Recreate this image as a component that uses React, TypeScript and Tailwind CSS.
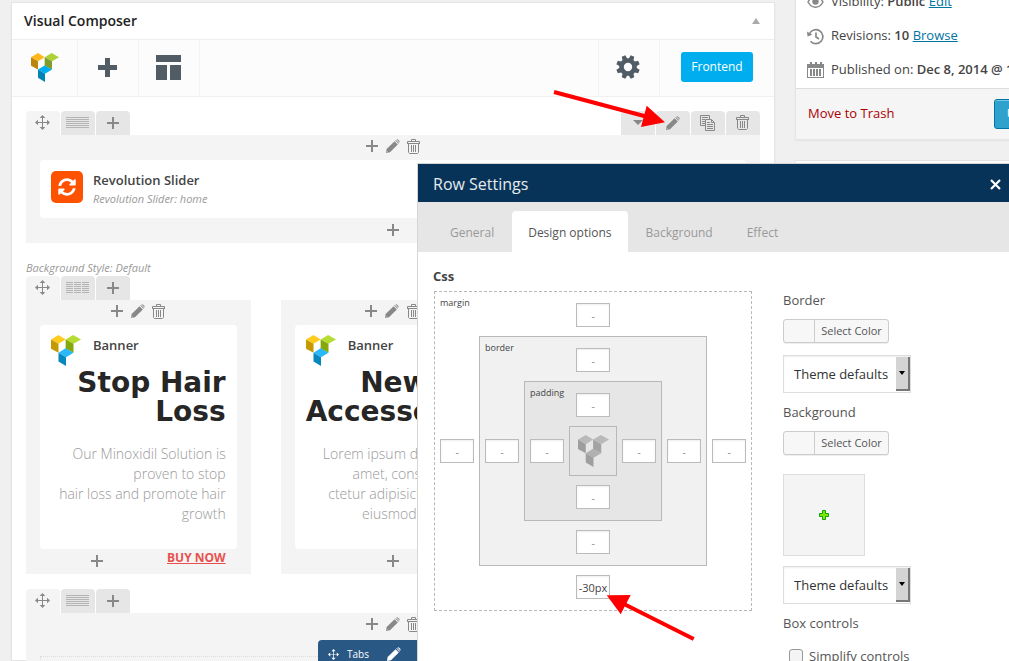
import type { ReactNode } from 'react';
import { FaSyncAlt } from 'react-icons/fa';

type BoxProps = { name: string; className: string; bottom?: string; children: ReactNode };

const LOGO_COLORS = {
  toolbar: ['#ffb71b', '#bb860b', '#aed136', '#7f9d2b', '#00aeef', '#0083b5'],
  element: ['#ffcc1d', '#c49a00', '#b5dc33', '#86a80e', '#29b8fa', '#0588bd'],
  gray: ['#b9b9b9', '#9d9d9d', '#b9b9b9', '#a3a3a3', '#b0b0b0', '#9f9f9f'],
};

function Logo({ variant, size }: { variant: keyof typeof LOGO_COLORS; size: number }) {
  const c = LOGO_COLORS[variant];
  return (
    <svg width={size} height={size + 1} viewBox="93 155 84 91" preserveAspectRatio="none" aria-hidden="true">
      <path fill={c[0]} d="M93 168l21-13 20 13-20 13z" />
      <path fill={c[1]} d="M93 168l21 13v26l-21-12z" />
      <path fill={c[2]} d="M134 168l21-13 22 13-21 13z" />
      <path fill={c[3]} d="M134 168l22 13v26l-22-12z" />
      <path fill={c[4]} d="M114 207l20-13 22 13-21 13z" />
      <path fill={c[5]} d="M114 207l21 13v26l-21-13z" />
    </svg>
  );
}

function PlusIcon() {
  return (
    <svg width="12" height="12" viewBox="0 0 12 12" fill="currentColor" aria-hidden="true">
      <path d="M5 0h2v5h5v2H7v5H5V7H0V5h5z" />
    </svg>
  );
}

function MoveIcon({ size = 15 }: { size?: number }) {
  return (
    <svg width={size} height={size} viewBox="0 0 15 15" fill="currentColor" aria-hidden="true">
      <path d="M7 2h1v5h5v1H8v5H7V8H2V7h5z" />
      <path d="M7.5 0L10.3 3H4.7zM7.5 15l2.8-3H4.7zM0 7.500l3-2.800v5.600zM15 7.500l-3-2.800v5.600z" />
    </svg>
  );
}

function PencilIcon() {
  return (
    <svg width="14" height="14" viewBox="0 0 14 14" fill="currentColor" aria-hidden="true">
      <path d="M0 14L.6 10 8.600 2.200l3.200 3.200L4 13.200z" />
      <path d="M9.300 1.600l.6-.6 3.100 3.100-.6.600zM10.500.500c1-1 4 2 3 3z" />
      <path fill="#fff" d="M.9 12.200l.9.900-.5.200-.6-.600z" />
    </svg>
  );
}

function TrashIcon() {
  return (
    <svg width="13" height="15" viewBox="0 0 13 15" fill="none" stroke="currentColor" aria-hidden="true">
      <path d="M4.500 2V.500h4V2M.500 4V2.500h12V4M0 4.500h13M1.500 5v8.500l1 1h8l1-1V5M4.500 6v7M6.500 6v7M8.500 6v7" />
    </svg>
  );
}

function CopyIcon() {
  return (
    <svg width="15" height="16" viewBox="0 0 15 16" fill="none" stroke="currentColor" aria-hidden="true">
      <path d="M5 10.500H.500V.500h9V4M2 2.500h6M2 4.500h3M2 6.500h3M2 8.500h3" />
      <path d="M5.500 4.500h6l3 3v8h-9zM11.500 5v2.500H14M7 7.500h3M7 9.500h6M7 11.500h6M7 13.500h6" />
    </svg>
  );
}

function LayoutIcon({ split }: { split?: boolean }) {
  const row = split ? 'h7m1 0h7m1 0h7' : 'h23';
  const d = [0, 2, 4, 6, 8, 10].map((y) => `M0 ${y + 0.5}${row}`).join('');
  return (
    <svg width="23" height="11" viewBox="0 0 23 11" stroke="#b4b4b4" aria-hidden="true">
      <path d={d} />
    </svg>
  );
}

function GearIcon() {
  return (
    <svg width="24" height="24" viewBox="-12 -12 24 24" fill="#515c65" aria-hidden="true">
      <circle r="6.500" fill="none" stroke="#515c65" strokeWidth="4.600" />
      {[22.5, 67.5, 112.5, 157.5, 202.5, 247.5, 292.5, 337.5].map((a) => (
        <path key={a} d="M-2.600-7.500L-1.900-11.800H1.900L2.600-7.500z" transform={`rotate(${a})`} />
      ))}
    </svg>
  );
}

const TAB = 'flex h-6 w-[34px] items-center justify-center rounded-t-sm pr-px pb-px text-[#888]';

function RowTabs({ split, actions }: { split?: boolean; actions?: boolean }) {
  return (
    <div className="flex justify-between">
      <div className="flex gap-px">
        <button className={`${TAB} bg-[#f4f4f4]`} aria-label="Drag row"><MoveIcon /></button>
        <button className={`${TAB} bg-[#e6e6e6]`} aria-label="Row layout"><LayoutIcon split={split} /></button>
        <button className={`${TAB} bg-[#e6e6e6]`} aria-label="Add column"><PlusIcon /></button>
      </div>
      {actions && (
        <div className="flex gap-px">
          <button className={`${TAB} bg-[#e6e6e6]`} aria-label="Toggle row">
            <svg width="10" height="5" viewBox="0 0 10 5" fill="currentColor"><path d="M0 0h10L5 5z" /></svg>
          </button>
          <button className={`${TAB} bg-[#e6e6e6]`} aria-label="Edit row"><PencilIcon /></button>
          <button className={`${TAB} bg-[#e6e6e6]`} aria-label="Clone row"><CopyIcon /></button>
          <button className={`${TAB} bg-[#e6e6e6]`} aria-label="Delete row"><TrashIcon /></button>
        </div>
      )}
    </div>
  );
}

function ColumnControls() {
  const control = 'flex w-[21px] justify-center pr-px';
  return (
    <div className="flex h-[25px] items-center justify-center pb-[3px] text-[#888]">
      <button className={control} aria-label="Add element"><PlusIcon /></button>
      <button className={control} aria-label="Edit column"><PencilIcon /></button>
      <button className={control} aria-label="Delete column"><TrashIcon /></button>
    </div>
  );
}

function BannerColumn({ title, lines, link }: { title: string[]; lines: string[]; link?: string }) {
  return (
    <div className="bg-[#f4f4f4]">
      <ColumnControls />
      <div className="mx-3.5 h-56 rounded-sm bg-white px-[11px] pt-2.5">
        <div className="flex h-[33px] gap-3">
          <Logo variant="element" size={30} />
          <h4 className="text-[13px] leading-5 font-semibold text-[#444]">Banner</h4>
        </div>
        <h2 className="text-right font-['DejaVu_Sans'] text-[28px] leading-[29px] font-bold whitespace-nowrap text-[#262626]">
          {title.map((t) => <span key={t} className="block">{t}</span>)}
        </h2>
        <p className="mt-[18px] text-right text-sm leading-5 font-light whitespace-nowrap text-[#999]">
          {lines.map((t) => <span key={t} className="block">{t}</span>)}
        </p>
      </div>
      <div className="flex h-[25px] items-center pb-0.5 text-[#888]">
        <button className="flex flex-1 justify-center" aria-label="Add element"><PlusIcon /></button>
        {link && <a href="#buy" className="mr-[25px] mb-1.5 text-xs leading-4 font-bold text-[#e8504f] underline">{link}</a>}
      </div>
    </div>
  );
}

function Composer() {
  return (
    <section className="mt-0.5 min-w-0 flex-1 border border-[#e5e5e5] bg-white shadow-xs">
      <header className="flex h-[37px] items-center justify-between border-b border-[#eee] pr-3.5 pl-3">
        <h1 className="text-sm font-semibold text-[#222]">Visual Composer</h1>
        <button aria-label="Collapse">
          <svg width="8" height="6" viewBox="0 0 8 6" fill="#aaa"><path d="M4 0l4 6H0z" /></svg>
        </button>
      </header>

      <div className="flex h-[57px] items-stretch border-b border-[#f0f0f0] bg-[#fcfcfc]">
        <div className="flex w-[66px] items-center justify-center border-r border-[#f2f2f2] pb-0.5">
          <Logo variant="toolbar" size={28} />
        </div>
        <button className="flex w-[61px] items-center justify-center border-r border-[#f2f2f2] pr-0.5 pb-0.5" aria-label="Add element">
          <svg width="19" height="19" viewBox="0 0 19 19" fill="#515c65"><path d="M7 0h5v7h7v5h-7v7H7v-7H0V7h7z" /></svg>
        </button>
        <button className="flex w-[61px] items-center justify-center border-r border-[#f2f2f2] pr-0.5 pb-0.5" aria-label="Templates">
          <svg width="25" height="25" viewBox="0 0 25 25" fill="#515c65"><path d="M0 0h25v7H0zM0 10h11v15H0zM14 10h11v15H14z" /></svg>
        </button>
        <button className="ml-auto flex w-[61px] items-center justify-center border-l border-[#f2f2f2] pr-0.5 pb-0.5" aria-label="Settings">
          <GearIcon />
        </button>
        <div className="flex items-center border-l border-[#f2f2f2] px-[21px] pb-0.5">
          <button className="h-[30px] w-[72px] rounded-[3px] bg-[#00aeef] text-xs text-white">Frontend</button>
        </div>
      </div>

      <div className="px-3.5 pt-3.5">
        <RowTabs actions />
        <div className="bg-[#f4f4f4]">
          <ColumnControls />
          <div className="mx-3.5 flex h-[58px] gap-2.5 rounded-sm bg-white px-[11px] pt-[11px]">
            <div className="flex size-8 items-center justify-center rounded-[5px] bg-[#ff5200] text-white">
              <FaSyncAlt size={18} />
            </div>
            <div className="leading-[18px]">
              <h4 className="text-[13px] font-semibold text-[#444]">Revolution Slider</h4>
              <p className="pt-px text-[11px] text-[#999] italic">Revolution Slider: home</p>
            </div>
          </div>
          <div className="flex h-[25px] items-center justify-center pb-0.5 text-[#888]">
            <button aria-label="Add element"><PlusIcon /></button>
          </div>
        </div>

        <p className="mt-4 text-[11px] leading-[17px] text-[#999] italic">Background Style: Default</p>
        <RowTabs split />
        <div className="grid grid-cols-3 gap-[30px]">
          <BannerColumn
            title={['Stop Hair', 'Loss']}
            lines={['Our Minoxidil Solution is', 'proven to stop', 'hair loss and promote hair', 'growth']}
            link="BUY NOW"
          />
          <BannerColumn
            title={['New Fit', 'Accessories']}
            lines={['Lorem ipsum dolor sit an', 'amet, consectetuers', 'ctetur adipisicing elit, do', 'eiusmod tempor is']}
          />
        </div>

        <div className="mt-[15px]">
          <RowTabs />
          <div className="bg-[#f4f4f4] pb-10">
            <ColumnControls />
            <div className="relative mx-3.5 mt-[18px] h-20 border border-dotted border-[#ddd]">
              <div className="absolute -top-[17px] left-1/2 flex h-7 w-[150px] -translate-x-1/2 items-center rounded-t-sm bg-[#2a5885] pl-2.5 text-white">
                <MoveIcon size={11} />
                <span className="ml-2 text-[10px]">Tabs</span>
                <button className="ml-[18px]" aria-label="Edit tabs"><PencilIcon /></button>
              </div>
            </div>
          </div>
        </div>
      </div>
    </section>
  );
}

function PublishBox() {
  const row = 'flex h-[34px] items-center gap-[7px]';
  return (
    <aside className="-mt-4 w-[214px] shrink-0">
      <div className="w-[280px] border border-[#e5e5e5] bg-white text-[13px] whitespace-nowrap text-[#444] shadow-xs">
        <div className="h-[104px] border-b border-[#ddd] pl-[11px]">
          <div className={row}>
            <svg width="17" height="14" viewBox="0 0 17 14" fill="none" stroke="#888" strokeWidth="1.500">
              <path d="M1 7c4-7 11-7 15 0-4 7-11 7-15 0z" />
              <circle cx="8.500" cy="6.500" r="3.200" fill="#888" stroke="none" />
            </svg>
            <p>Visibility: <b className="font-semibold">Public</b> <a href="#edit" className="text-[#0074a2] underline">Edit</a></p>
          </div>
          <div className={row}>
            <svg width="17" height="17" viewBox="0 0 17 17" fill="none" stroke="#888" strokeWidth="1.700">
              <path d="M2.400 6A7 7 0 1 1 3.500 13.200M9 4.500V9l3 2" />
              <path d="M0 3.500l.5 5 4.800-1.800z" fill="#888" stroke="none" />
            </svg>
            <p>Revisions: <b className="font-semibold">10</b> <a href="#browse" className="text-[#0074a2] underline">Browse</a></p>
          </div>
          <div className={row}>
            <svg width="17" height="16" viewBox="0 0 17 16" fill="#888">
              <path d="M0 2h3V0h2v2h3V0h2v2h3V0h2v2h2v14H0zM1 6v9h15V6z" fillRule="evenodd" />
              <path d="M3 7h2v7H3zM6 7h2v7H6zM9 7h2v7H9zM12 7h2v7h-2z" />
            </svg>
            <p>Published on: <b className="font-semibold">Dec 8, 2014 @ 10:15</b></p>
          </div>
        </div>
        <div className="flex h-[50px] items-center justify-between bg-[#f5f5f5] pr-2.5 pl-3">
          <a href="#trash" className="text-[#a00]">Move to Trash</a>
          <button className="h-[30px] w-[70px] rounded-[3px] border border-[#0074a2] bg-[#2ea2cc] text-white shadow-[inset_0_1px_0_#78c8e6]">Update</button>
        </div>
      </div>
      <div className="mt-5 h-40 w-[280px] border border-[#e5e5e5] bg-white" />
    </aside>
  );
}

function SideInput({ id, label, value = '' }: { id?: string; label: string; value?: string }) {
  return (
    <input
      id={id}
      aria-label={label}
      defaultValue={value}
      placeholder="-"
      className="h-6 w-[34px] border border-[#bbb] bg-white text-center text-[11px] text-[#444] shadow-[inset_0_1px_2px_#eee] outline-none placeholder:text-[10px] placeholder:text-[#888]"
    />
  );
}

function CssBox({ name, className, bottom, children }: BoxProps) {
  return (
    <div className={`grid grid-cols-[44px_1fr_44px] grid-rows-[44px_1fr_44px] place-items-center border border-[#b8b8b8] ${className}`}>
      <label htmlFor={`${name}-top`} className="place-self-start pt-[5px] pl-[5px] text-[9px] leading-3 text-[#444]">{name}</label>
      <div className="flex pt-0.5"><SideInput id={`${name}-top`} label={`${name} top`} /></div>
      <span />
      <SideInput label={`${name} left`} />
      {children}
      <SideInput label={`${name} right`} />
      <span />
      <div className="flex pb-0.5"><SideInput label={`${name} bottom`} value={bottom} /></div>
      <span />
    </div>
  );
}

function ColorButton() {
  return (
    <button className="flex h-6 w-[106px] items-stretch rounded-[3px] border border-[#ccc] bg-[#f7f7f7] text-[11px] text-[#555] shadow-[0_1px_0_#eee]">
      <span className="w-[31px] border-r border-[#ccc]" />
      <span className="flex-1 leading-[22px]">Select Color</span>
    </button>
  );
}

function ThemeSelect({ label }: { label: string }) {
  return (
    <div className="relative w-32">
      <select aria-label={label} className="h-[38px] w-full appearance-none border border-[#ddd] bg-white pl-2.5 text-[13px] text-[#333] shadow-[inset_0_1px_2px_#eee]">
        <option>Theme defaults</option>
      </select>
      <span className="pointer-events-none absolute inset-y-0.5 right-px flex w-3.5 items-center justify-center border-r-2 border-b-2 border-[#777] bg-[#d4d4d4]">
        <svg width="6" height="4" viewBox="0 0 6 4"><path d="M0 0h6L3 4z" /></svg>
      </span>
    </div>
  );
}

function RowSettings() {
  const tab = 'h-[41px] rounded-t px-4 pt-0.5 text-xs';
  return (
    <div role="dialog" aria-label="Row Settings" className="absolute top-[163px] right-0 bottom-0 left-[417px] overflow-hidden border-t border-l border-[#d5d5d5] bg-white">
      <header className="flex h-[38px] items-center justify-between bg-[#083358] pt-0.5 pr-2 pl-[15px]">
        <h2 className="text-base text-[#e6ebef]">Row Settings</h2>
        <button aria-label="Close">
          <svg width="11" height="11" viewBox="0 0 11 11" stroke="#fff" strokeWidth="2.200"><path d="M1 1l9 9M10 1l-9 9" /></svg>
        </button>
      </header>
      <nav className="flex h-[50px] items-end gap-0.5 bg-[#e6e6e6] pl-4">
        <button className={`${tab} text-[#999]`}>General</button>
        <button className={`${tab} bg-white text-[#555]`}>Design options</button>
        <button className={`${tab} text-[#999]`}>Background</button>
        <button className={`${tab} text-[#999]`}>Effect</button>
      </nav>

      <div className="flex gap-[31px] pt-3.5 pl-[15px] text-[13px] leading-5 text-[#555]">
        <div>
          <h3 className="mb-[5px] font-bold text-[#444]">Css</h3>
          <CssBox name="margin" bottom="-30px" className="ml-px h-80 w-[318px] border-dashed">
            <CssBox name="border" className="size-full bg-[#f1f1f1]">
              <CssBox name="padding" className="size-full bg-[#e6e6e6]">
                <div className="flex size-full items-center justify-center border border-[#b8b8b8]">
                  <Logo variant="gray" size={31} />
                </div>
              </CssBox>
            </CssBox>
          </CssBox>
        </div>

        <div className="pt-6">
          <h4 className="mb-[9px]">Border</h4>
          <ColorButton />
          <div className="mt-3 mb-[9px]"><ThemeSelect label="Border style" /></div>
          <h4 className="mb-[9px]">Background</h4>
          <ColorButton />
          <button className="mt-[19px] mb-2.5 flex size-[82px] items-center justify-center border border-[#ddd] bg-[#f4f4f4]" aria-label="Add background image">
            <svg width="10" height="10" viewBox="0 0 10 10" fill="#7fe800" stroke="#12a012"><path d="M3.500.500h3v3h3v3h-3v3h-3v-3h-3v-3h3z" /></svg>
          </button>
          <ThemeSelect label="Background style" />
          <h4 className="mt-[9px] mb-[13px]">Box controls</h4>
          <label className="flex items-center gap-1.5 pl-1.5">
            <input type="checkbox" className="size-3.5 appearance-none rounded-[3px] border border-[#999] bg-[#f4f4f4]" />
            Simplify controls
          </label>
        </div>
      </div>
    </div>
  );
}

export default function App() {
  return (
    <div className="relative flex h-screen gap-5 overflow-hidden bg-[#f0f0f0] pl-[11px] font-['Open_Sans',sans-serif]">
      <Composer />
      <PublishBox />
      <RowSettings />

      {/* Callout arrows drawn over the page */}
      <svg className="pointer-events-none absolute top-[88px] left-[552px]" width="116" height="44" viewBox="552 88 116 44" fill="#f00" aria-hidden="true">
        <path d="M554 92l92 24.500" stroke="#f00" strokeWidth="4" />
        <path d="M665 122.300L646.700 105.700 641 127z" />
      </svg>
      <svg className="pointer-events-none absolute top-[592px] left-[604px]" width="94" height="52" viewBox="604 592 94 52" fill="#f00" aria-hidden="true">
        <path d="M693.700 639L624 604" stroke="#f00" strokeWidth="4" />
        <path d="M606.700 595.300l24-.3-10 19.300z" />
      </svg>
    </div>
  );
}
